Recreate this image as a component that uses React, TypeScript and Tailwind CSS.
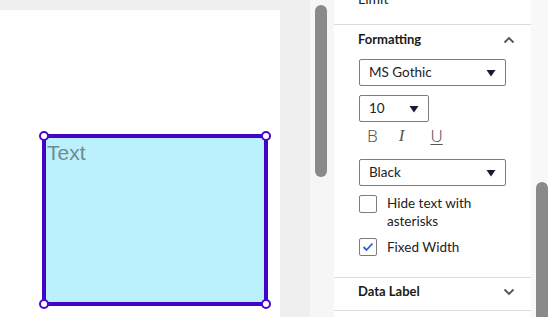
import React from "react";

const font = { fontFamily: "Lato, 'Noto Sans', sans-serif" };

const Caret = () => (
  <svg width="10" height="8" viewBox="0 0 10 8" className="shrink-0">
    <path d="M0.5 1 L9.5 1 L5 7.5 Z" fill="#1d1838" />
  </svg>
);

const Chevron = ({ up }: { up?: boolean }) => (
  <svg width="12" height="8" viewBox="0 0 12 8">
    <path
      d={up ? "M1.5 6.5 L6 2 L10.5 6.5" : "M1.5 1.5 L6 6 L10.5 1.5"}
      fill="none"
      stroke="#555"
      strokeWidth="1.8"
    />
  </svg>
);

const Select = ({ value, w }: { value: string; w: string }) => (
  <div
    className={`flex items-center justify-between h-[27px] ${w} border border-[#7d7d7d] rounded-[2px] pl-[9px] pr-[9px] text-[13.5px] text-[#222]`}
  >
    <span>{value}</span>
    <Caret />
  </div>
);

const Handle = ({ cls }: { cls: string }) => (
  <div
    className={`absolute w-[10px] h-[10px] rounded-full bg-white border-2 border-[#4a06c9] ${cls}`}
  />
);

export default function App() {
  return (
    <div className="flex w-[548px] h-[317px] bg-[#efefef] overflow-hidden" style={font}>
      {/* canvas */}
      <div className="w-[280px] pt-[10px] flex">
        <div className="relative flex-1 bg-white">
          <div className="absolute left-[42px] top-[124px] w-[226px] h-[172px] bg-[#bbf0fd] border-4 border-[#4005c6]">
            <span
              className="block text-[21px] leading-none text-[#6f8a90] pl-[1px] pt-[4px]"
              style={{ fontFamily: "'Liberation Sans', Arial, sans-serif" }}
            >
              Text
            </span>
          </div>
          <Handle cls="left-[38.5px] top-[120.5px]" />
          <Handle cls="left-[261px] top-[120.5px]" />
          <Handle cls="left-[38.5px] top-[288.5px]" />
          <Handle cls="left-[261px] top-[288.5px]" />
        </div>
      </div>
      <div className="w-[30px]" />
      {/* left scroll rail */}
      <div className="w-[24px] bg-[#f6f6f6] pt-[5px] pl-[5px]">
        <div className="w-[12px] h-[172px] rounded-full bg-[#8a8a8a]" />
      </div>
      {/* property panel */}
      <div className="w-[197px] bg-white flex flex-col">
        <div className="h-[25px] border-b border-[#dcdcdc] relative overflow-hidden">
          <span className="absolute left-[24px] -top-[12px] text-[14px] text-[#222]">Limit</span>
        </div>
        <div className="pl-[24px] pr-[16px]">
          <div className="flex items-center justify-between h-[28px] mt-[1px]">
            <span className="text-[13px] font-bold text-[#1a1a1a]">Formatting</span>
            <Chevron up />
          </div>
          <div className="pl-[1px] mt-[5px]">
            <Select value="MS Gothic" w="w-[147px]" />
            <div className="mt-[9px]">
              <Select value="10" w="w-[70px]" />
            </div>
            <div className="flex items-center h-[27px] text-[#555] text-[17px] leading-none">
              <span className="ml-[8px] font-light" style={{ fontFamily: "'Noto Sans', sans-serif" }}>B</span>
              <span className="ml-[21px] italic" style={{ fontFamily: "'Liberation Serif', serif" }}>I</span>
              <span className="ml-[26px] underline underline-offset-2 font-light" style={{ fontFamily: "'Noto Sans', sans-serif" }}>U</span>
            </div>
            <div className="mt-[10px]">
              <Select value="Black" w="w-[147px]" />
            </div>
            <div className="flex mt-[9px] gap-[10px] text-[13.5px] text-[#222] leading-[18px]">
              <div className="w-[18px] h-[18px] border border-[#7d7d7d] rounded-[2px] shrink-0" />
              <div className="-mt-[1px]">
                Hide text with
                <br />
                asterisks
              </div>
            </div>
            <div className="flex mt-[8px] gap-[10px] text-[13.5px] text-[#222] leading-[18px] items-center">
              <div className="w-[18px] h-[18px] border border-[#7d7d7d] rounded-[2px] shrink-0 flex items-center justify-center">
                <svg width="12" height="10" viewBox="0 0 12 10">
                  <path d="M1.5 5 L4.5 8 L10.5 1.5" fill="none" stroke="#2f62c9" strokeWidth="1.8" />
                </svg>
              </div>
              <span>Fixed Width</span>
            </div>
          </div>
        </div>
        <div className="mt-[21px] border-t border-b border-[#dcdcdc] h-[34px] pb-[4px] pl-[24px] pr-[16px] flex items-center justify-between">
          <span className="text-[13px] font-bold text-[#1a1a1a]">Data Label</span>
          <Chevron />
        </div>
      </div>
      {/* right scroll rail */}
      <div className="flex-1 bg-[#f8f8f8] pt-[182px] pl-[5px]">
        <div className="w-[12px] h-[200px] rounded-t-full bg-[#8a8a8a]" />
      </div>
    </div>
  );
}
